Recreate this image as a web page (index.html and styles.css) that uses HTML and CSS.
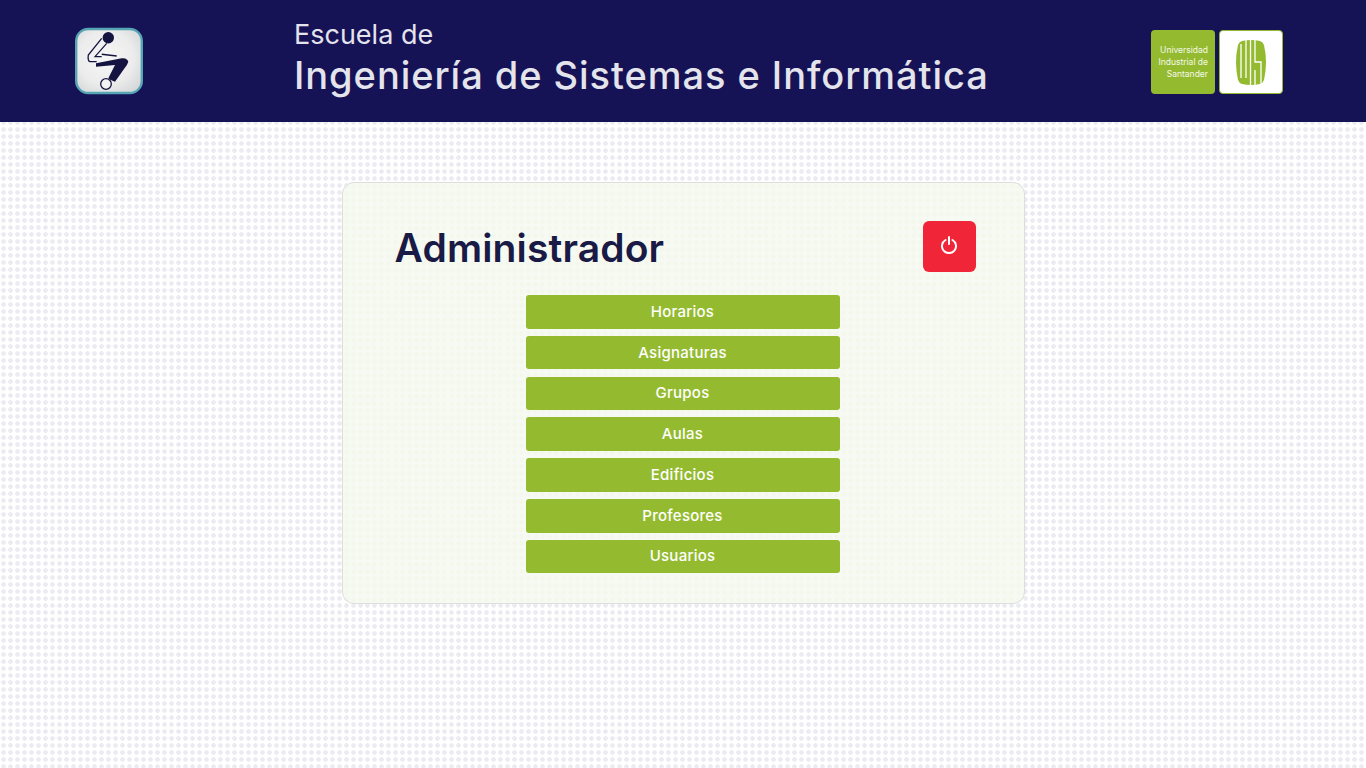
FILE: index.html
```html
<!DOCTYPE html>
<html lang="es">
<head>
    <meta charset="UTF-8">
    <meta name="viewport" content="width=device-width, initial-scale=1.0">
    <title>Administrador</title>
    <link rel="stylesheet" href="styles.css">
</head>
<body>
    <header class="topbar">
        <div class="school-logo">
            <svg width="68" height="68" viewBox="0 0 68 68">
                <defs>
                    <radialGradient id="tile" cx="0.45" cy="0.45" r="0.7">
                        <stop offset="0" stop-color="#f6f6f6"/>
                        <stop offset="0.6" stop-color="#ececec"/>
                        <stop offset="1" stop-color="#d2d4d6"/>
                    </radialGradient>
                </defs>
                <rect x="1.200" y="2" width="65.600" height="64" rx="12" fill="url(#tile)" stroke="#55a5b5" stroke-width="2.400"/>
                <path d="M26.700 11.300 L13.300 28 Q12.500 34 15 34.700 L21.700 34.700" fill="none" stroke="#15133f" stroke-width="1.300"/>
                <path d="M31.700 16.300 L20 29.700 L26.700 29.700" fill="none" stroke="#15133f" stroke-width="1.200"/>
                <circle cx="33.300" cy="10.700" r="5.700" fill="#15133f"/>
                <path d="M26.700 27.300 L41.700 29" fill="none" stroke="#15133f" stroke-width="1.500"/>
                <path d="M21 36.300 L46.700 31.300 Q52 30.500 53.300 34.700 Q52.500 38 49 42 L40 54.700 Q36 54 33.300 51.300 L40 38 L21 39.700 Z" fill="#15133f"/>
                <circle cx="31" cy="57" r="5.300" fill="#f4f4f4" stroke="#15133f" stroke-width="1.300"/>
            </svg>
        </div>
        <div class="school-name">
            <span class="school-pre">Escuela de</span>
            <span class="school-main">Ingeniería de Sistemas e Informática</span>
        </div>
        <div class="uis-logo">
            <div class="uis-text">Universidad<br>Industrial de<br>Santander</div>
            <div class="uis-mark">
                <svg width="32" height="45" viewBox="0 0 32 45">
                    <path d="M7 1 Q16 -1 25 1 Q28 2 29 5 Q33 22 29 40 Q28 43 25 44 Q16 46 7 44 Q4 43 3 40 Q-1 22 3 5 Q4 2 7 1 Z" fill="#94bb30"/>
                    <path d="M6 4 V38 M11 0 V38 M15.500 0 V45 M20 0 V22 H26 V45 M20 30 V45" fill="none" stroke="#fff" stroke-width="1.300"/>
                </svg>
            </div>
        </div>
    </header>

    <main class="card">
        <div class="card-head">
            <h1>Administrador</h1>
            <button class="logout" type="button">
                <svg width="16" height="18" viewBox="0 0 16 18">
                    <path d="M4.500 4 A7 7 0 1 0 11.500 4" fill="none" stroke="#fff" stroke-width="2" stroke-linecap="round"/>
                    <path d="M8 1 V8" fill="none" stroke="#fff" stroke-width="2" stroke-linecap="round"/>
                </svg>
            </button>
        </div>
        <nav class="menu">
            <a href="#">Horarios</a>
            <a href="#">Asignaturas</a>
            <a href="#">Grupos</a>
            <a href="#">Aulas</a>
            <a href="#">Edificios</a>
            <a href="#">Profesores</a>
            <a href="#">Usuarios</a>
        </nav>
    </main>
</body>
</html>
```

FILE: styles.css
```css
* {
    box-sizing: border-box;
}
body {
    margin: 0;
    min-height: 768px;
    font-family: Inter, "Open Sans", sans-serif;
    background-color: #fff;
    background-image: radial-gradient(circle, #ecebf2 2px, transparent 2.5px);
    background-size: 7px 7px;
}
.topbar {
    height: 122px;
    background-color: #161256;
    display: flex;
    align-items: center;
    padding: 0 83px 0 75px;
}
.school-logo {
    width: 68px;
    height: 68px;
}
.school-name {
    margin-left: 151px;
    display: flex;
    flex-direction: column;
    color: #e4e4ec;
    flex: 1;
}
.school-pre {
    font-size: 27px;
    line-height: 34px;
    margin-top: -8px;
    padding-top: 2px;
}
.school-main {
    font-size: 38px;
    line-height: 46px;
    font-weight: 500;
    letter-spacing: 0.95px;
}
.uis-logo {
    display: flex;
    gap: 4px;
    margin-top: 2px;
}
.uis-text {
    width: 64px;
    height: 64px;
    background-color: #94bb30;
    border-radius: 4px;
    color: #f4f8e8;
    font-size: 8.500px;
    line-height: 12px;
    text-align: right;
    padding: 14px 7px 0 0;
}
.uis-mark {
    width: 64px;
    height: 64px;
    background-color: #fff;
    border: 1px solid #94bb30;
    border-radius: 4px;
    display: flex;
    align-items: center;
    justify-content: center;
}
.card {
    width: 683px;
    height: 422px;
    margin: 60px auto 0;
    padding: 38px 48px 30px 52px;
    background-color: #f7faf2;
    background-image: radial-gradient(circle, #f3f7ec 2px, transparent 2.5px);
    background-size: 7px 7px;
    border: 1px solid #dcdedb;
    border-radius: 12px;
}
.card-head {
    display: flex;
    align-items: center;
    justify-content: space-between;
    height: 52px;
}
h1 {
    margin: 0;
    font-size: 39px;
    font-weight: 600;
    letter-spacing: 0.15px;
    color: #191a45;
}
.logout {
    width: 53px;
    height: 51px;
    margin-top: -2px;
    background-color: #f02638;
    border: none;
    border-radius: 6px;
    display: flex;
    align-items: center;
    justify-content: center;
    padding: 0 0 3px;
}
.menu {
    width: 314px;
    margin: 22px 0 0 131px;
    display: flex;
    flex-direction: column;
    gap: 7.200px;
}
.menu a {
    height: 33.600px;
    background-color: #94bb30;
    border-radius: 3px;
    color: #fff;
    font-size: 15px;
    font-weight: 500;
    letter-spacing: 0.25px;
    text-decoration: none;
    display: flex;
    align-items: center;
    justify-content: center;
    padding-bottom: 1px;
}
```
